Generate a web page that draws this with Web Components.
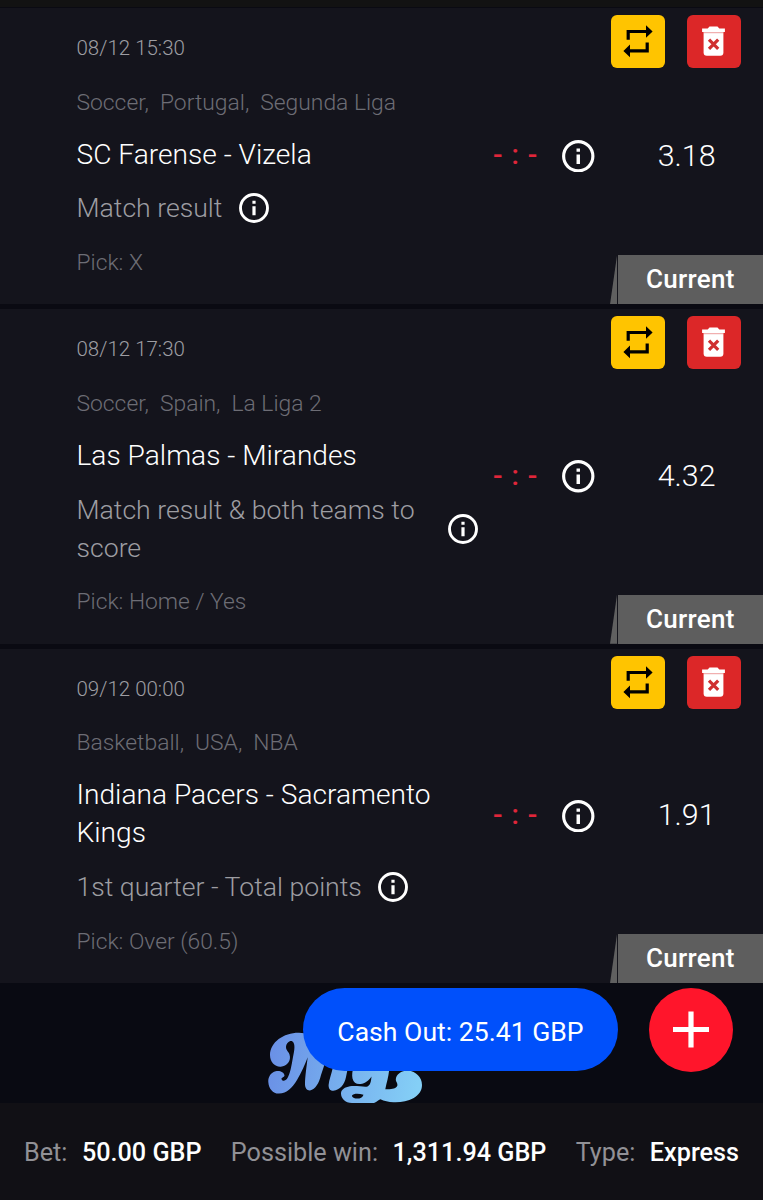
<!DOCTYPE html>
<html lang="en">
<head>
<meta charset="utf-8">
<title>My bets</title>
<style>
  html,body{ margin:0; height:100%; }
  body{
    --muted:#9d9da2; --dim:#6d6d75; --card:#14141c; --page:#090a12;
    background:var(--page); color:#fff;
    font-family:Roboto, "Liberation Sans", sans-serif; font-weight:300;
    overflow:hidden;
  }
</style>
</head>
<body>
<bet-slip>
  <bet-event date="08/12 15:30" league="Soccer,|Portugal,|Segunda Liga" match="SC Farense - Vizela" market="Match result" pick="X" odds="3.18" status="Current"></bet-event>
  <bet-event date="08/12 17:30" league="Soccer,|Spain,|La Liga 2" match="Las Palmas - Mirandes" market="Match result &amp; both teams to score" pick="Home / Yes" odds="4.32" status="Current"></bet-event>
  <bet-event date="09/12 00:00" league="Basketball,|USA,|NBA" match="Indiana Pacers - Sacramento Kings" market="1st quarter - Total points" pick="Over (60.5)" odds="1.91" status="Current"></bet-event>
  <brand-logo slot="brand"></brand-logo>
  <cash-out slot="actions">Cash Out: 25.41 GBP</cash-out>
  <add-button slot="actions"></add-button>
  <bet-total slot="totals" label="Bet:">50.00 GBP</bet-total>
  <bet-total slot="totals" label="Possible win:">1,311.94 GBP</bet-total>
  <bet-total slot="totals" label="Type:">Express</bet-total>
</bet-slip>

<script>
(function () {
  const ICONS = {
    info: `<svg viewBox="0 0 32 32" aria-hidden="true">
      <circle cx="16" cy="16" r="14.4" fill="none" stroke="currentColor" stroke-width="3.1"/>
      <path d="M14.3 8.3h3.4v3.2h-3.4zM14.3 14.2h3.4v9.5h-3.4z" fill="currentColor"/></svg>`,

    repeat: `<svg viewBox="0 0 54 54" aria-hidden="true">
      <path d="M17.2 24.7v-8.2h18.6M36.2 27.5v8.4H18.4" fill="none" stroke="currentColor" stroke-width="3.2"/>
      <path d="M35 10.2l6.6 6.3-6.6 6.3zM19 29.6l-6.6 6.3 6.6 6.3z" fill="currentColor"/></svg>`,

    trash: `<svg viewBox="0 0 54 54" aria-hidden="true">
      <path d="M15.1 13.4v3.7h22.8v-3.7h-5.6l-1.8-1.8h-8l-1.8 1.8z" fill="currentColor"/>
      <path d="M16.6 17h19.8v20.6a3.2 3.2 0 0 1-3.2 3.2H19.8a3.2 3.2 0 0 1-3.2-3.2z" fill="currentColor"/>
      <path d="M16.6 17.7h19.8" stroke="#dc2728" stroke-width=".9" opacity=".5"/>
      <path d="M22 24.6l9.2 9.2M31.2 24.6L22 33.8" stroke="#cf2f2f" stroke-width="3.2"/></svg>`
  };

  // every element renders its markup into an open root
  class BaseElement extends HTMLElement{
    constructor(){
      super();
      this.attachShadow({mode:'open'});
    }
    connectedCallback(){ this.shadowRoot.innerHTML = this.render(); }
    attr(name){
      return (this.getAttribute(name) || '').replace(/&/g, '&amp;').replace(/</g, '&lt;');
    }
  }

  class InfoIcon extends BaseElement{
    render(){
      return `<style>
        :host{ display:block; flex:none; width:var(--size,30px); height:var(--size,30px); color:#fff; }
        svg{ display:block; width:100%; height:100%; }
      </style>${ICONS.info}`;
    }
  }

  class IconButton extends BaseElement{
    render(){
      return `<style>
        :host{ display:block; }
        button{
          display:block; width:53.5px; height:53px; padding:0; border:0; border-radius:6px;
          background:#ffc400; color:#000;
        }
        :host([kind="trash"]) button{ background:#dc2728; color:#fff; }
        svg{ display:block; width:54px; height:54px; }
      </style><button aria-label="${this.attr('kind')}">${ICONS[this.getAttribute('kind')]}</button>`;
    }
  }

  class StatusTag extends BaseElement{
    render(){
      return `<style>
        :host{ display:flex; height:49px; }
        i{ width:7px; background:#606060; clip-path:polygon(100% 0, 100% 100%, 0 100%); }
        span{
          width:145px; margin-left:1px; box-sizing:border-box; padding-left:28px; background:#5e5e5e;
          font-size:26px; line-height:49px; font-weight:500; letter-spacing:.3px;
        }
      </style><i></i><span><slot></slot></span>`;
    }
  }

  class BetEvent extends BaseElement{
    render(){
      const league = this.attr('league').split('|').map(s => `<span>${s}</span>`).join('');
      return `<style>
        :host{
          display:grid; grid-template-columns:402px 76px 48px 1fr; grid-template-rows:auto 1fr auto;
          padding-left:76.5px; background:var(--card);
        }
        .text{ grid-area:1 / 1 / 4 / 2; padding:24px 0 25.4px; }
        .date{ font-size:20.5px; line-height:32px; color:var(--muted); }
        .league{ display:flex; gap:11px; margin-top:22.5px; font-size:22.85px; line-height:32px; color:var(--dim); }
        .match{ margin-top:17.2px; font-size:28.15px; line-height:38px; }
        .market{ display:flex; align-items:center; gap:16.4px; margin-top:15.8px; font-size:26.63px; line-height:38px; color:var(--muted); }
        .market span{ max-width:355px; }
        .pick{ margin-top:19.5px; font-size:22.8px; line-height:32px; color:var(--dim); }
        .score, info-icon.live, .odds{ grid-row:1 / 4; align-self:center; }
        .score{ grid-column:2; padding:0 0 3px 14.5px; font-size:28px; font-weight:500; letter-spacing:1px; white-space:nowrap; color:#e0263a; }
        info-icon.live{ grid-column:3; justify-self:center; --size:32.5px; }
        .odds{ grid-column:4; padding:0 47.5px 2px 0; text-align:right; font-size:30.4px; }
        .tools{ grid-area:1 / 3 / 2 / 5; display:flex; justify-content:flex-end; gap:22.5px; padding:7px 22.5px 0 0; }
        status-tag{ grid-area:3 / 3 / 4 / 5; justify-self:end; }
      </style>
      <div class="text">
        <div class="date">${this.attr('date')}</div>
        <div class="league">${league}</div>
        <div class="match">${this.attr('match')}</div>
        <div class="market"><span>${this.attr('market')}</span><info-icon></info-icon></div>
        <div class="pick">Pick: ${this.attr('pick')}</div>
      </div>
      <div class="score">- : -</div>
      <info-icon class="live"></info-icon>
      <div class="odds">${this.attr('odds')}</div>
      <div class="tools"><icon-button kind="repeat"></icon-button><icon-button kind="trash"></icon-button></div>
      <status-tag>${this.attr('status')}</status-tag>`;
    }
  }

  class BrandLogo extends BaseElement{
    render(){
      return `<style>
        :host{ display:block; width:156px; height:72px; overflow:hidden; }
        svg{ display:block; }
      </style>
      <svg width="156" height="72" viewBox="0 0 156 72" aria-hidden="true">
        <defs><linearGradient id="g" gradientUnits="userSpaceOnUse" x1="0" y1="30" x2="150" y2="55">
          <stop offset="0" stop-color="#6a90e6"/><stop offset="1" stop-color="#84cff6"/>
        </linearGradient></defs>
        <g fill="url(#g)">
          <path d="M31 1.7C16 1.5 2 11 2 24C2 31 7 36 12.7 35.7C19 35.3 23.5 29.5 21.5 23.5C20.5 20.5 18 19.5 18 16C18.3 12 22 9 24.5 10.5C27.5 13 26.5 19 25 26C23.5 35 22 43 19.5 47C17.5 50.5 14 50.5 13.5 48C13.3 46.5 16 46.5 16.5 44.5C16 41 11.5 39.3 7.7 40.3C3 41.3 0 46 .3 51C.8 58 5 62.8 11 62.6C19 62.3 24.5 56.5 29 49C33.5 41.5 37 33.5 39.7 26.3C38.8 34 37 46 37 53C37 57 39 59.6 42 59.4C47.5 58.5 51 52 53 44L56 35L54 4Z"/>
          <path d="M65 36C63.5 43 61 49 60.6 54C60.5 58 62.5 60 65.3 59.7C72 59 76.5 53.5 78 46L80 36Z"/>
          <path fill-rule="evenodd" d="M85.5 36C84.3 40 83.8 44 84.5 47.5C85.5 51.7 88.5 53.4 92.5 53C97 52.5 101 49.5 103.5 45.5C103 50.5 102.5 53.8 99.5 55.4C96.5 56.3 88 54.3 82 55.2C77 56 73 58.5 73 62.5C73 67 77 72 84 72L106 72C109 71 111 68.5 112.5 68.3C116 70 121 71.4 126 71.3C133 71.5 140 70.3 145.3 67.3C151 64 154 59.5 154 54C154 46 148 40.5 140 39.5C133 39.5 128 43.5 127.8 48.5C127.8 51 130 52 129.3 54.8C128.5 57.8 122 58.8 117.3 58.2C118.5 52 120.5 46 121.2 39L121 34ZM84 64.5C85.5 62.2 91 62.5 95.5 63.7C94.5 67 91 68 87.5 67.4C85.3 67 83.7 66 84 64.5Z"/>
        </g>
      </svg>`;
    }
  }

  class CashOut extends BaseElement{
    render(){
      return `<style>
        :host{ display:block; }
        button{
          display:block; width:315px; height:83px; padding:3px 0 0; border:0; border-radius:42px;
          background:#0050fb; color:#fff; font:400 26.6px Roboto, sans-serif;
        }
      </style><button><slot></slot></button>`;
    }
  }

  class AddButton extends BaseElement{
    render(){
      return `<style>
        :host{ display:block; }
        button{ display:block; width:84px; height:84px; padding:0; border:0; border-radius:50%; background:#ff152b; }
        svg{ display:block; }
      </style>
      <button aria-label="Add"><svg width="84" height="84" viewBox="0 0 84 84">
        <path d="M42 23.5v36M24 41.5h36" stroke="#fff" stroke-width="5.2"/></svg></button>`;
    }
  }

  class BetTotal extends BaseElement{
    render(){
      return `<style>
        :host{ display:flex; gap:14.5px; font-size:25.2px; font-weight:500; white-space:nowrap; }
        label{ font-weight:400; color:#919196; }
      </style><label>${this.attr('label')}</label><span><slot></slot></span>`;
    }
  }

  class BetSlip extends BaseElement{
    render(){
      return `<style>
        :host{
          display:flex; flex-direction:column; height:1200px; width:763px; box-sizing:border-box;
          position:relative; border-top:7px solid #121212;
        }
        .events{ display:flex; flex-direction:column; gap:5px; padding-top:1px; background:#0a0a12; }
        .brand{ flex:1; display:flex; align-items:flex-end; padding-left:268px; }
        .float{ position:absolute; right:30px; top:981px; display:flex; gap:31px; }
        .totals{
          height:97px; box-sizing:border-box; padding:2px 24px 0; display:flex; align-items:center;
          justify-content:space-between; background:#111015;
        }
      </style>
      <div class="events"><slot></slot></div>
      <div class="brand"><slot name="brand"></slot></div>
      <div class="totals"><slot name="totals"></slot></div>
      <div class="float"><slot name="actions"></slot></div>`;
    }
  }

  customElements.define('info-icon', InfoIcon);
  customElements.define('icon-button', IconButton);
  customElements.define('status-tag', StatusTag);
  customElements.define('bet-event', BetEvent);
  customElements.define('brand-logo', BrandLogo);
  customElements.define('cash-out', CashOut);
  customElements.define('add-button', AddButton);
  customElements.define('bet-total', BetTotal);
  customElements.define('bet-slip', BetSlip);
})();
</script>
</body>
</html>
